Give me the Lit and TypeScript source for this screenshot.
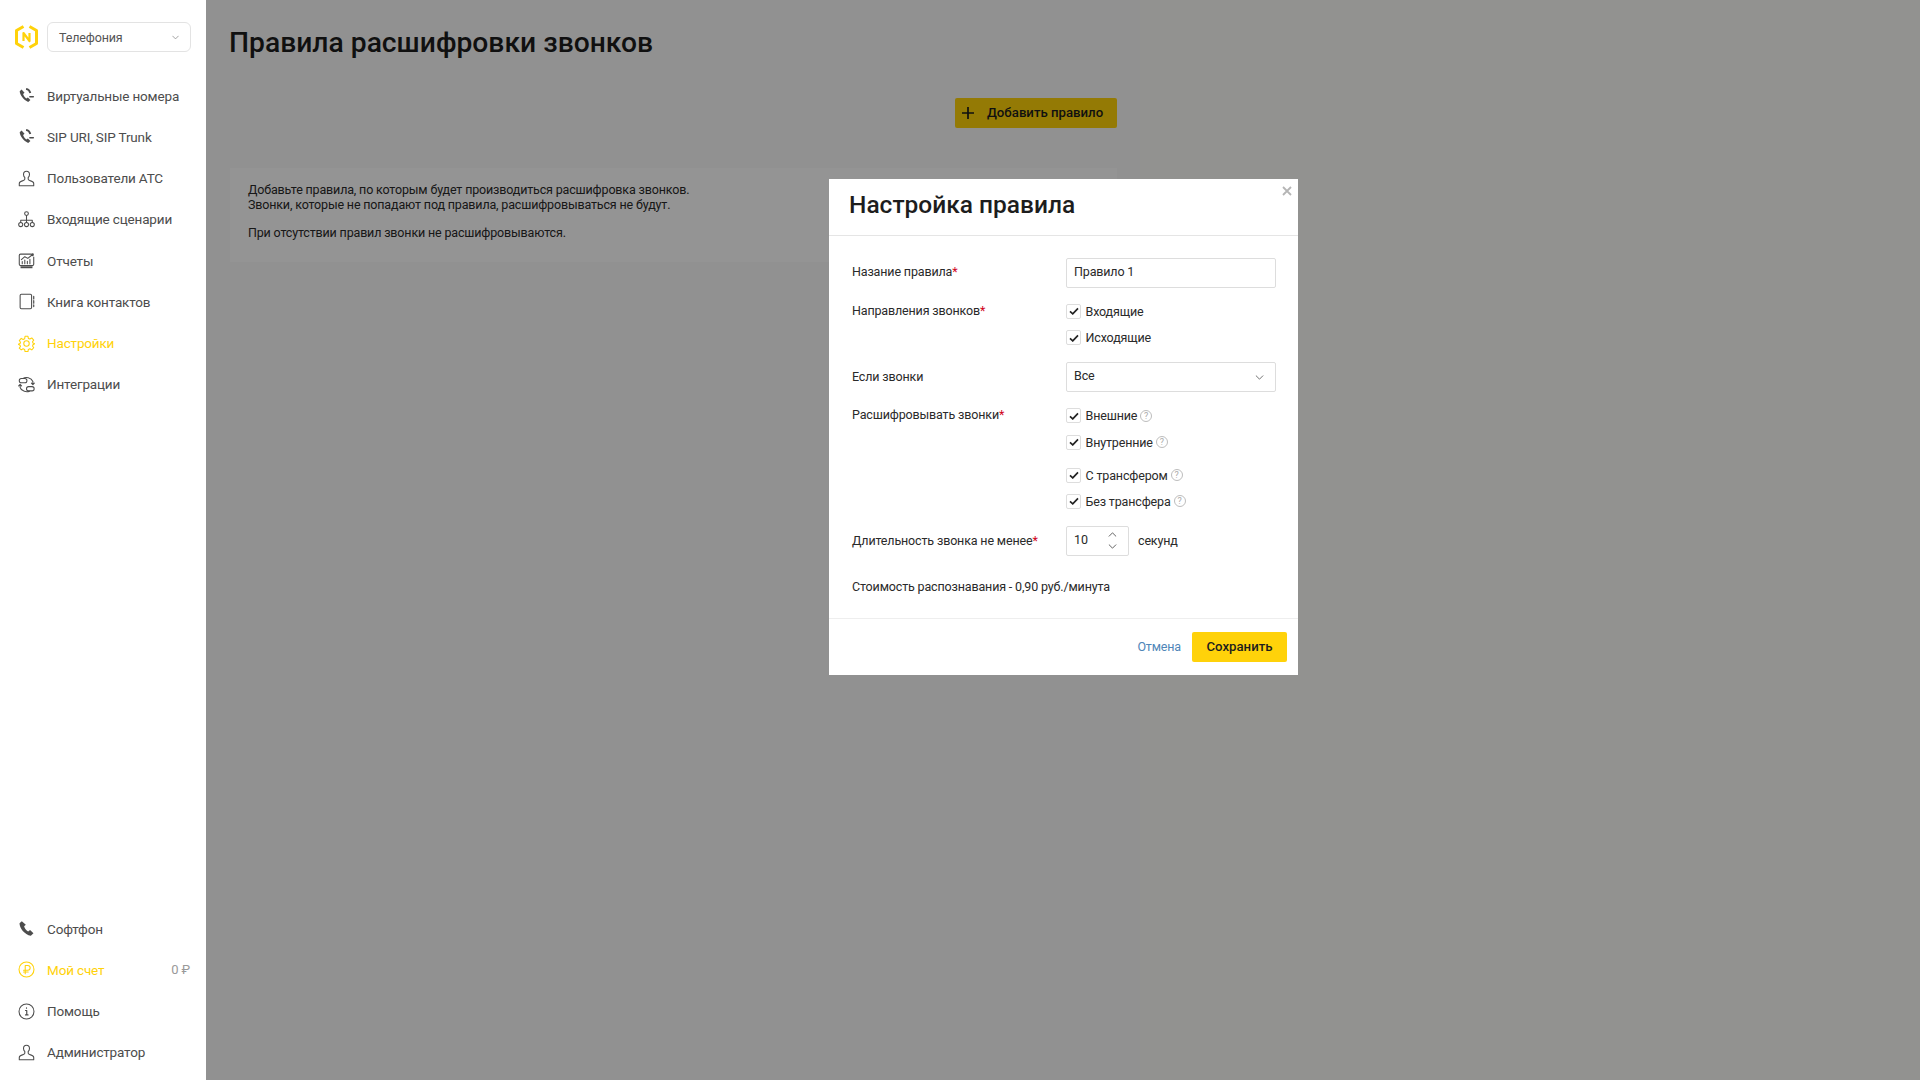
import { LitElement, html, css, svg } from "lit";
import { customElement } from "lit/decorators.js";

const s = (inner: unknown) => html`<svg class="ic" viewBox="0 0 20 20" fill="none" stroke="currentColor" stroke-width="1.25" stroke-linecap="round" stroke-linejoin="round">${inner}</svg>`;
const phoneWave = s(svg`<path d="M4.200 3 2 5c.3 4.600 4.600 10.400 10 12.500l2.600-2.200-3-3-1.900 1.200C8 12.300 6.600 10.300 6 8.300l1.700-1.500z" fill="currentColor" stroke="none"/><path d="M9.500 2.200c2.600.5 4.300 2.200 5 4.800" stroke-width="2.200" stroke-linecap="butt"/><path d="M14 11.500h4" stroke-width="1.800"/>`);
const user = s(svg`<path d="M10 1.500c-2.300 0-3.500 1.600-3.500 3.700 0 1.500.7 2.900 1.500 3.600v2c0 .8-.7 1.200-2.200 1.700-2.600.8-4.300 1.500-4.300 3.400v2.600h17v-2.600c0-1.900-1.700-2.600-4.300-3.400-1.500-.5-2.200-.9-2.200-1.700v-2c.8-.7 1.500-2.100 1.500-3.600 0-2.100-1.200-3.700-3.500-3.700z"/>`);
const tree = s(svg`<circle cx="10" cy="3" r="2.200"/><circle cx="3.200" cy="16" r="2.400"/><circle cx="10" cy="16" r="2.400"/><circle cx="16.800" cy="16" r="2.400"/><path d="M10 5.200v8.400M3.200 13.600v-2.800h13.600v2.800"/>`);
const report = s(svg`<path d="M15 2.500H3A1.500 1.500 0 0 0 1.500 4v10.500c0 1 .5 1.500 1.500 1.500h14c1 0 1.500-.5 1.500-1.500V6"/><path d="M3 18h14" stroke-width="2.200" stroke-linecap="butt"/><path d="M5 13.800v-2.500M8 13.800V9.500M11 13.800v-3M14 13.800V8.500M4 9l4-3.500 3.500 2 5-4"/><circle cx="17" cy="3.200" r="1.700" fill="currentColor" stroke="none"/>`);
const book = s(svg`<rect x="2.500" y="1.500" width="13.500" height="17" rx="1.500"/><path d="M18.500 4v3M18.500 9v3M18.500 14v2" stroke-width="1.400"/>`);
const gear = s(svg`<circle cx="10" cy="10" r="3.200"/><path d="M8.300 1.500h3.400l.5 2.500 1.800.8 2.200-1.300 2.300 2.500-1.400 2 .5 1.500 2 .8v0l-2 1.200-.5 1.500 1.400 2-2.300 2.500-2.200-1.300-1.800.8-.5 2.500H8.300l-.5-2.500-1.800-.8-2.200 1.300L1.500 15.500l1.400-2-.5-1.500-2-1.200v0l2-.8.5-1.500-1.400-2L3.800 4l2.200 1.300L7.800 4.500z"/>`);
const integ = s(svg`<rect x="1.500" y="3" width="9" height="5" rx="2.400"/><rect x="10" y="12.500" width="9" height="5" rx="2.400"/><path d="M6 2.800C9 .8 15.500 1.500 17.500 6.500V10M19.200 8.300l-1.700 1.900-1.700-1.900M13.500 18c-3 1.200-9.500.5-11-4.500V10M.8 11.700l1.700-1.900 1.700 1.900"/>`);
const phone = s(svg`<path d="M4.500 1.500 1.800 3.700c-.2 5.500 6 13.500 13.300 14.800l3.100-2.900-4-3.700-2.300 1.600C9.700 12.300 7.700 9.700 7.200 7.300l2-1.700z" fill="currentColor" stroke="none"/>`);
const ruble = s(svg`<circle cx="10" cy="10" r="8.800"/><path d="M8.500 15V5.200h3a2.700 2.700 0 0 1 0 5.600H6.500M6.500 13h5.500"/>`);
const info = s(svg`<circle cx="10" cy="10" r="8.800"/><path d="M8.800 8.800H10.300V14M8.800 14h3M10 5.800v.3" stroke-width="1.400"/>`);
const chevron = html`<svg class="chev" viewBox="0 0 10 6" fill="none" stroke="currentColor" stroke-width="1.100" stroke-linecap="round" stroke-linejoin="round"><path d="M1 1l4 4 4-4"/></svg>`;
const check = html`<span class="box"><svg viewBox="0 0 12 10" fill="none" stroke="#222" stroke-width="2"><path d="M1.200 5.200 4.500 8.200 10.800 1.500"/></svg></span>`;
const help = html`<span class="help">?</span>`;

const topItems: [unknown, string, boolean][] = [
  [phoneWave, "Виртуальные номера", false],
  [phoneWave, "SIP URI, SIP Trunk", false],
  [user, "Пользователи АТС", false],
  [tree, "Входящие сценарии", false],
  [report, "Отчеты", false],
  [book, "Книга контактов", false],
  [gear, "Настройки", true],
  [integ, "Интеграции", false],
];

@customElement("app-root")
export class AppRoot extends LitElement {
  static styles = css`
    :host { display: block; width: 1920px; height: 1080px; position: relative; overflow: hidden; font-family: Roboto, "Liberation Sans", sans-serif; color: #222; background: #fff; }
    .page { display: flex; height: 1080px; }
    aside { width: 206px; flex: none; display: flex; flex-direction: column; position: relative; z-index: 2; background: #fff; }
    .head { display: flex; align-items: center; gap: 8px; padding: 22px 15px 0 14px; height: 30px; margin-bottom: 23px; }
    .logo { width: 25px; height: 26px; flex: none; }
    .sel { flex: 1; height: 30px; box-sizing: border-box; border: 1px solid #e3e3e3; border-radius: 6px; display: flex; align-items: center; justify-content: space-between; padding: 0 11px; font-size: 12.5px; letter-spacing: -.15px; color: #555; }
    .sel .chev { width: 7px; height: 5px; color: #888; }
    .nav { display: flex; flex-direction: column; }
    .item { height: 41.25px; display: flex; align-items: center; padding-left: 18px; font-size: 13.5px; letter-spacing: -.16px; color: #4d4d4d; gap: 12px; }
    .item.on { color: #ffd20a; }
    .ic { width: 17px; height: 17px; flex: none; color: #4d4d4d; }
    .on .ic { color: #ffd20a; }
    .val { margin-left: auto; padding-right: 16px; color: #999; font-size: 13px; }
    .spacer { flex: 1; }
    .bottom { padding-bottom: 7px; }
    main { flex: 1; display: flex; background: #fbfbf8; }
    .content { width: 934px; box-sizing: border-box; padding: 25px 23px 0 24px; background: #fafafa; }
    h1 { margin: 0 0 0 -1px; font-size: 28.25px; line-height: 36px; font-weight: 500; color: #1d1d1d; }
    .actions { display: flex; justify-content: flex-end; margin-top: 37px; }
    .add { height: 30px; width: 162px; box-sizing: border-box; border-radius: 2px; background: #ffd20a; display: flex; align-items: center; padding-left: 6px; gap: 12px; font-size: 13.2px; font-weight: 500; color: #1d1d1d; }
    .add span { margin-top: -1px; }
    .add svg { width: 14px; height: 14px; }
    .note { margin-top: 40px; background: #fff; padding: 15px 18px 18px; font-size: 12.5px; letter-spacing: -.16px; line-height: 14.5px; color: #2a2a2a; height: 94px; box-sizing: border-box; }
    .note p { margin: 0 0 13.5px; }
    .overlay { position: absolute; left: 206px; top: 0; right: 0; bottom: 0; background: rgba(0,0,0,.42); z-index: 3; }
    .modal { position: absolute; left: 829px; top: 179px; width: 469px; height: 496px; background: #fff; z-index: 4; display: flex; flex-direction: column; }
    .close { position: absolute; right: 6px; top: 7px; width: 10px; height: 10px; color: #b5b5b5; }
    .mhead { height: 57px; box-sizing: border-box; border-bottom: 1px solid #e5e5e5; padding: 8px 20px 0; font-size: 24.5px; line-height: 36px; font-weight: 500; color: #1d1d1d; flex: none; }
    .form { padding: 22px 23px 0; flex: 1; font-size: 12.5px; letter-spacing: -.15px; color: #2a2a2a; display: grid; grid-template-columns: 214px 210px; align-content: start; }
    .lab { line-height: 16px; }
    .lab b { color: #d0021b; font-weight: 400; }
    .lab.off { margin-top: -1px; }
    .lab.first { box-sizing: border-box; padding-bottom: 2px; }
    .input { height: 30px; box-sizing: border-box; border: 1px solid #ddd; border-radius: 2px; padding: 0 7px 3px; display: flex; align-items: center; justify-content: space-between; }
    .input .chev { width: 9px; height: 5px; margin: 3px 4px 0 0; color: #666; }
    .r1 { display: flex; align-items: center; height: 30px; }
    .g16 { margin-bottom: 16px; }
    .g17 { margin-bottom: 17px; }
    .g18 { margin-bottom: 18px; }
    .cks { display: flex; flex-direction: column; gap: 11.3px; }
    .ck { display: flex; align-items: center; gap: 4.5px; height: 15px; }
    .box { width: 15px; height: 15px; box-sizing: border-box; border: 1px solid #ddd; border-radius: 2px; display: flex; align-items: center; justify-content: center; flex: none; }
    .box svg { width: 10px; height: 8.5px; }
    .help { width: 12px; height: 12px; box-sizing: border-box; border: 1px solid #bdbdbd; border-radius: 50%; color: #aaa; font-size: 9px; line-height: 10px; text-align: center; margin-left: -1.5px; letter-spacing: 0; }
    .num { display: flex; align-items: center; gap: 9px; }
    .spin { width: 63px; height: 30px; box-sizing: border-box; border: 1px solid #ddd; border-radius: 2px; display: flex; align-items: center; justify-content: space-between; padding: 0 11px 3px 7px; }
    .arrows { display: flex; flex-direction: column; gap: 7px; color: #555; margin-top: 3px; }
    .arrows svg { display: block; width: 9px; height: 5px; }
    .up { transform: rotate(180deg); }
    .cost { grid-column: 1 / 3; margin-top: 23px; line-height: 16px; }
    .mfoot { height: 57px; flex: none; box-sizing: border-box; border-top: 1px solid #eee; display: flex; align-items: center; justify-content: flex-end; padding: 0 11px 1px 0; gap: 11px; }
    .cancel { color: #4f86b8; font-size: 12.5px; letter-spacing: -.15px; }
    .save { width: 95px; height: 30px; border-radius: 2px; background: #ffd20a; font-size: 13.2px; font-weight: 500; color: #1d1d1d; display: flex; align-items: center; justify-content: center; }
  `;

  private row(icon: unknown, text: string, on = false, val = "") {
    return html`<div class="item ${on ? "on" : ""}">${icon}<span>${text}</span>${val ? html`<span class="val">${val}</span>` : ""}</div>`;
  }

  render() {
    const ck = (t: string, h = false) => html`<div class="ck">${check}<span>${t}</span>${h ? help : ""}</div>`;
    return html`
      <div class="page">
        <aside>
          <div class="head">
            <svg class="logo" viewBox="0 0 25 26" fill="none" stroke="#ffd20a" stroke-width="3" stroke-linejoin="round">
              <path d="M9.500 2.500 2.500 6.500v13l7 4M15.500 2.500l7 4v13l-7 4"/>
              <path d="M9.500 17V9l6 8V9" stroke-width="2.200"/>
            </svg>
            <div class="sel"><span>Телефония</span>${chevron}</div>
          </div>
          <div class="nav">${topItems.map(([i, t, o]) => this.row(i, t, o))}</div>
          <div class="spacer"></div>
          <div class="nav bottom">
            ${this.row(phone, "Софтфон")}
            ${this.row(ruble, "Мой счет", true, "0 ₽")}
            ${this.row(info, "Помощь")}
            ${this.row(user, "Администратор")}
          </div>
        </aside>
        <main>
          <div class="content">
            <h1>Правила расшифровки звонков</h1>
            <div class="actions">
              <div class="add">
                <svg viewBox="0 0 14 14" stroke="#1d1d1d" stroke-width="1.700"><path d="M7 1v12M1 7h12"/></svg>
                <span>Добавить правило</span>
              </div>
            </div>
            <div class="note">
              <p>Добавьте правила, по которым будет производиться расшифровка звонков.<br />Звонки, которые не попадают под правила, расшифровываться не будут.</p>
              <p>При отсутствии правил звонки не расшифровываются.</p>
            </div>
          </div>
        </main>
      </div>
      <div class="overlay"></div>
      <div class="modal">
        <svg class="close" viewBox="0 0 10 10" stroke="currentColor" stroke-width="1.800"><path d="M1 1l8 8M9 1l-8 8"/></svg>
        <div class="mhead">Настройка правила</div>
        <div class="form">
          <div class="lab r1 first g16">Назание правила<b>*</b></div>
          <div class="input r1 g16">Правило 1</div>

          <div class="lab off">Направления звонков<b>*</b></div>
          <div class="cks g17">${ck("Входящие")}${ck("Исходящие")}</div>

          <div class="lab r1 g16">Если звонки</div>
          <div class="input r1 g16">Все ${chevron}</div>

          <div class="lab off">Расшифровывать звонки<b>*</b></div>
          <div class="g17">
            <div class="cks g18">${ck("Внешние", true)}${ck("Внутренние", true)}</div>
            <div class="cks">${ck("С трансфером", true)}${ck("Без трансфера", true)}</div>
          </div>

          <div class="lab r1">Длительность звонка не менее<b>*</b></div>
          <div class="num">
            <div class="spin"><span>10</span><div class="arrows"><span class="up">${chevron}</span><span>${chevron}</span></div></div>
            <span>секунд</span>
          </div>

          <div class="cost">Стоимость распознавания - 0,90 руб./минута</div>
        </div>
        <div class="mfoot"><span class="cancel">Отмена</span><div class="save">Сохранить</div></div>
      </div>
    `;
  }
}
